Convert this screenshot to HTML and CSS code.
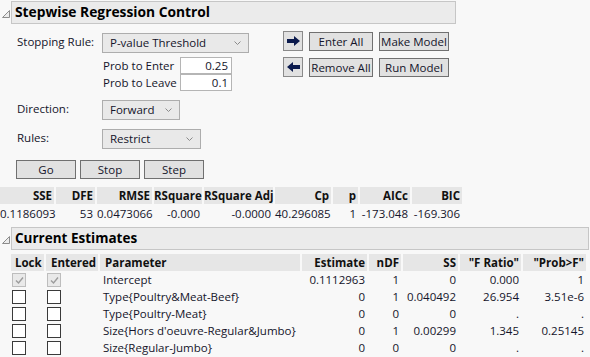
FILE: index.html
```html
<!DOCTYPE html>
<html lang="en">
<head>
    <meta charset="UTF-8">
    <title>Stepwise Regression Control</title>
    <link rel="stylesheet" href="styles.css">
</head>
<body>

    <div class="outline">
        <svg class="disclose" width="11" height="10" viewBox="0 0 11 10"><path d="M9.5 1.5v7h-7z" fill="#ececec" stroke="#8c8c8c"/></svg>
        <div class="outline-title ctl-title">Stepwise Regression Control</div>
    </div>

    <div class="control">
        <div class="form-col">
            <div class="field-row">
                <span class="field-label">Stopping Rule:</span>
                <div class="combo combo-rule">P-value Threshold
                    <svg class="chev" width="7" height="4" viewBox="0 0 7 4"><path d="M0.5 0.5l3 3 3-3" fill="none" stroke="#8a8a8a"/></svg>
                </div>
            </div>
            <div class="prob-row prob-first">
                <span class="prob-label">Prob to Enter</span>
                <div class="num-box">0.25</div>
            </div>
            <div class="prob-row">
                <span class="prob-label">Prob to Leave</span>
                <div class="num-box">0.1</div>
            </div>
            <div class="field-row spaced">
                <span class="field-label">Direction:</span>
                <div class="combo combo-dir">Forward
                    <svg class="chev" width="7" height="4" viewBox="0 0 7 4"><path d="M0.5 0.5l3 3 3-3" fill="none" stroke="#8a8a8a"/></svg>
                </div>
            </div>
            <div class="field-row spaced">
                <span class="field-label">Rules:</span>
                <div class="combo combo-rules">Restrict
                    <svg class="chev" width="7" height="4" viewBox="0 0 7 4"><path d="M0.5 0.5l3 3 3-3" fill="none" stroke="#8a8a8a"/></svg>
                </div>
            </div>
            <div class="go-row">
                <button class="btn go-btn">Go</button>
                <button class="btn go-btn">Stop</button>
                <button class="btn go-btn">Step</button>
            </div>
        </div>

        <div class="btn-col">
            <div class="btn-row">
                <button class="arrow-btn">
                    <svg width="13" height="10" viewBox="0 0 13 10"><path d="M0 3h7V0l6 5-6 5V7H0z" fill="#0b1a4d"/></svg>
                </button>
                <button class="btn enter-btn">Enter All</button>
                <button class="btn model-btn">Make Model</button>
            </div>
            <div class="btn-row second">
                <button class="arrow-btn">
                    <svg width="13" height="10" viewBox="0 0 13 10"><path d="M13 3H6V0L0 5l6 5V7h7z" fill="#0b1a4d"/></svg>
                </button>
                <button class="btn enter-btn">Remove All</button>
                <button class="btn model-btn">Run Model</button>
            </div>
        </div>
    </div>

    <table class="stats">
        <colgroup>
            <col style="width: 56px">
            <col style="width: 41px">
            <col style="width: 57px">
            <col style="width: 50px">
            <col style="width: 71px">
            <col style="width: 58px">
            <col style="width: 27px">
            <col style="width: 52px">
            <col style="width: 52px">
        </colgroup>
        <thead>
            <tr>
                <th>SSE</th>
                <th>DFE</th>
                <th>RMSE</th>
                <th>RSquare</th>
                <th>RSquare Adj</th>
                <th>Cp</th>
                <th>p</th>
                <th>AICc</th>
                <th>BIC</th>
            </tr>
        </thead>
        <tbody>
            <tr>
                <td>0.1186093</td>
                <td>53</td>
                <td>0.0473066</td>
                <td>-0.000</td>
                <td>-0.0000</td>
                <td>40.296085</td>
                <td>1</td>
                <td>-173.048</td>
                <td>-169.306</td>
            </tr>
        </tbody>
    </table>

    <div class="outline est-outline">
        <svg class="disclose" width="11" height="10" viewBox="0 0 11 10"><path d="M9.5 1.5v7h-7z" fill="#ececec" stroke="#8c8c8c"/></svg>
        <div class="outline-title est-title">Current Estimates</div>
    </div>

    <table class="estimates">
        <colgroup>
            <col style="width: 35px">
            <col style="width: 54px">
            <col style="width: 202px">
            <col style="width: 67px">
            <col style="width: 34px">
            <col style="width: 57px">
            <col style="width: 63px">
            <col style="width: 65px">
        </colgroup>
        <thead>
            <tr>
                <th class="left">Lock</th>
                <th class="left">Entered</th>
                <th class="left">Parameter</th>
                <th>Estimate</th>
                <th>nDF</th>
                <th>SS</th>
                <th>"F Ratio"</th>
                <th>"Prob&gt;F"</th>
            </tr>
        </thead>
        <tbody>
            <tr>
                <td class="box-cell"><span class="chk chk-fixed"><svg width="11" height="11" viewBox="0 0 11 11"><path d="M2 5.5l2.5 2.5 4.5-5.5" fill="none" stroke="#9c9c9c" stroke-width="1.4"/></svg></span></td>
                <td class="box-cell"><span class="chk chk-fixed"><svg width="11" height="11" viewBox="0 0 11 11"><path d="M2 5.5l2.5 2.5 4.5-5.5" fill="none" stroke="#9c9c9c" stroke-width="1.4"/></svg></span></td>
                <td class="left">Intercept</td>
                <td>0.1112963</td>
                <td>1</td>
                <td>0</td>
                <td>0.000</td>
                <td>1</td>
            </tr>
            <tr>
                <td class="box-cell"><span class="chk"></span></td>
                <td class="box-cell"><span class="chk"></span></td>
                <td class="left">Type{Poultry&amp;Meat-Beef}</td>
                <td>0</td>
                <td>1</td>
                <td>0.040492</td>
                <td>26.954</td>
                <td>3.51e-6</td>
            </tr>
            <tr>
                <td class="box-cell"><span class="chk"></span></td>
                <td class="box-cell"><span class="chk"></span></td>
                <td class="left">Type{Poultry-Meat}</td>
                <td>0</td>
                <td>0</td>
                <td>0</td>
                <td>.</td>
                <td>.</td>
            </tr>
            <tr>
                <td class="box-cell"><span class="chk"></span></td>
                <td class="box-cell"><span class="chk"></span></td>
                <td class="left">Size{Hors d'oeuvre-Regular&amp;Jumbo}</td>
                <td>0</td>
                <td>1</td>
                <td>0.00299</td>
                <td>1.345</td>
                <td>0.25145</td>
            </tr>
            <tr>
                <td class="box-cell"><span class="chk"></span></td>
                <td class="box-cell"><span class="chk"></span></td>
                <td class="left">Size{Regular-Jumbo}</td>
                <td>0</td>
                <td>0</td>
                <td>0</td>
                <td>.</td>
                <td>.</td>
            </tr>
        </tbody>
    </table>

</body>
</html>
```

FILE: styles.css
```css
body {
    margin: 0;
    background: #f8f8f8;
    font-family: "Open Sans", "Noto Sans", sans-serif;
    font-size: 11.5px;
    color: #14142a;
    width: 590px;
    height: 357px;
    overflow: hidden;
}

/* outline headers */
.outline {
    display: flex;
    align-items: center;
    height: 23px;
    margin-top: 1px;
}
.disclose {
    margin-top: 2px;
}
.outline-title {
    height: 21px;
    line-height: 20px;
    border: 1px solid #c6c6c6;
    background: #ebebeb;
    font-weight: bold;
    font-size: 13.8px;
    color: #000;
    padding-left: 3px;
}
.ctl-title {
    width: 440px;
}
.est-title {
    flex: 1;
    margin-right: 1px;
    font-size: 13.5px;
}
.est-outline {
    margin-top: 4px;
}

/* control panel */
.control {
    display: flex;
    padding-left: 17px;
    margin-top: 9px;
}
.form-col {
    width: 266px;
}
.field-row {
    display: flex;
    align-items: center;
    height: 20px;
}
.field-label {
    width: 85px;
    margin-top: -3px;
}
.combo {
    position: relative;
    height: 18px;
    line-height: 18px;
    border: 1px solid #adadad;
    background: #e9e9e9;
    padding-left: 7px;
}
.chev {
    position: absolute;
    right: 7px;
    top: 7px;
}
.combo-rule { width: 138px; }
.combo-dir { width: 69px; }
.combo-rules { width: 90px; }
.prob-row {
    display: flex;
    align-items: center;
    margin-left: 86px;
    height: 17px;
}
.prob-first { margin-top: 4px; }
.prob-label {
    width: 77px;
}
.num-box {
    width: 47px;
    height: 15px;
    line-height: 15px;
    border: 1px solid #b5b5b5;
    background: #fff;
    text-align: right;
    padding-right: 3px;
}
.spaced { margin-top: 9px; }
.go-row {
    display: flex;
    gap: 4px;
    margin-top: 11px;
    margin-left: -1px;
}

/* buttons */
.btn {
    font-family: inherit;
    font-size: 11.5px;
    color: #14142a;
    background: #e1e1e1;
    border: 1px solid #707070;
    height: 19px;
    padding: 0;
    margin: 0;
    white-space: nowrap;
}
.go-btn { width: 60px; }
.btn-col {
    display: flex;
    flex-direction: column;
    margin-top: -2px;
}
.btn-row {
    display: flex;
    align-items: center;
    gap: 6px;
}
.btn-row.second { margin-top: 6px; }
.enter-btn { width: 64px; }
.model-btn { width: 70px; }
.arrow-btn {
    width: 20px;
    height: 20px;
    padding: 0;
    background: #e1e1e1;
    border: 1px solid #8a8a8a;
    display: flex;
    align-items: center;
    justify-content: center;
}

/* report tables */
table {
    border-collapse: separate;
    border-spacing: 0;
    table-layout: fixed;
}
th, td {
    box-sizing: border-box;
    text-align: right;
    padding: 0 2px 0 0;
    border-right: 2px solid transparent;
    height: 17px;
    white-space: nowrap;
    overflow: visible;
}
th {
    background: #e6e6e6;
    background-clip: padding-box;
    font-weight: bold;
    color: #111;
}
.stats {
    width: 464px;
    margin-top: 8px;
}
.stats td { height: 19px; }

.estimates {
    width: 577px;
    margin-top: 4px;
    margin-left: 11px;
}
.estimates .left {
    text-align: left;
    padding-left: 3px;
}
.estimates th.left {
    padding-left: 5px;
}
.estimates th:first-child {
    padding-left: 4px;
}
.box-cell {
    text-align: left;
    padding: 0 0 0 1px;
}
.chk {
    display: block;
    box-sizing: border-box;
    width: 14px;
    height: 14px;
    border: 1px solid #3a3a3a;
    background: #fff;
}
.chk svg {
    display: block;
    margin: 1px;
}
.chk-fixed {
    border-color: #bdbdbd;
    background: #e9e9e9;
}
```
